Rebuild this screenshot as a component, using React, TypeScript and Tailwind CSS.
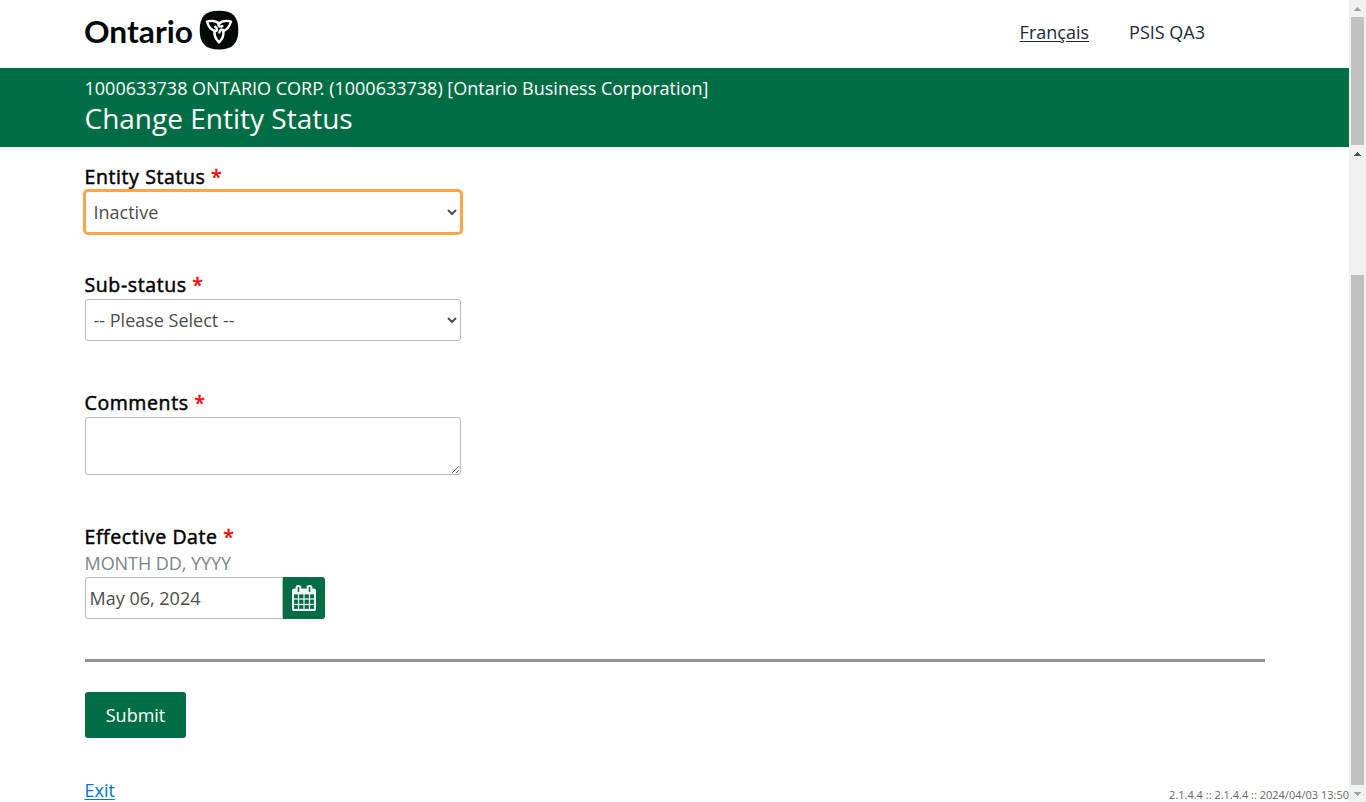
import React from 'react';

const PETAL = 'M15.600 20.400C14.800 24.800 16.500 28.900 20 32.400C23.500 28.900 25.300 24.600 24.200 20.200C22.700 18.900 20.600 19.500 20.400 22.600';

function TrilliumMark() {
  return (
    <svg className="h-10 w-10" viewBox="0 0 40 40" fill="none" aria-hidden="true">
      <path
        d="M20 .7C33.5.7 39.3 6.500 39.300 20S33.500 39.500 20 39.500.700 33.500.700 20 6.500.700 20 .700Z"
        fill="#040909"
      />
      <g stroke="#fff" strokeWidth="2.4" strokeLinejoin="round" strokeLinecap="round">
        <path d={PETAL} />
        <path d={PETAL} transform="rotate(120 20 18.500)" />
        <path d={PETAL} transform="rotate(240 20 18.500)" />
      </g>
    </svg>
  );
}

function CalendarIcon() {
  return (
    <svg className="h-[26px] w-6" viewBox="0 0 1664 1792" fill="#fff" stroke="#fff" strokeWidth="14" aria-hidden="true">
      <path d="M128 1664h288v-288h-288v288zm352 0h320v-288h-320v288zm-352-352h288v-320h-288v320zm352 0h320v-320h-320v320zm-352-384h288v-288h-288v288zm736 736h320v-288h-320v288zm-384-736h320v-288h-320v288zm768 736h288v-288h-288v288zm-384-352h320v-320h-320v320zm-352-864v-288q0-13-9.500-22.500t-22.500-9.500h-64q-13 0-22.500 9.500t-9.500 22.500v288q0 13 9.500 22.500t22.500 9.500h64q13 0 22.500-9.500t9.500-22.500zm736 864h288v-320h-288v320zm-384-384h320v-288h-320v288zm384 0h288v-288h-288v288zm32-480v-288q0-13-9.500-22.500t-22.500-9.500h-64q-13 0-22.500 9.500t-9.500 22.500v288q0 13 9.500 22.500t22.500 9.500h64q13 0 22.500-9.500t9.500-22.500zm384-64v1280q0 52-38 90t-90 38h-1408q-52 0-90-38t-38-90v-1280q0-52 38-90t90-38h128v-96q0-66 47-113t113-47h64q66 0 113 47t47 113v96h384v-96q0-66 47-113t113-47h64q66 0 113 47t47 113v96h128q52 0 90 38t38 90z" />
    </svg>
  );
}

function Arrow({ down = false, dark = false }: { down?: boolean; dark?: boolean }) {
  return (
    <div className="flex h-[17px] shrink-0 items-center justify-center">
      <svg
        className={down ? 'h-1 w-[7px] rotate-180' : 'h-1 w-[7px]'}
        viewBox="0 0 7 4"
        shapeRendering="crispEdges"
        aria-hidden="true"
      >
        <path d="M3 0h1v1h1v1h1v1h1v1H0V3h1V2h1V1h1z" fill={dark ? '#505050' : '#a3a3a3'} />
      </svg>
    </div>
  );
}

function ScrollColumn() {
  return (
    <div className="flex h-full w-[17px] shrink-0 flex-col bg-[#f1f1f1]">
      <Arrow />
      <div className="mx-0.5 h-32 bg-[#c1c1c1]" />
      <Arrow dark />
      <div className="mx-0.5 mt-[113px] h-[510px] bg-[#c1c1c1]" />
      <Arrow down />
    </div>
  );
}

function FieldLabel({ htmlFor, children }: { htmlFor: string; children: React.ReactNode }) {
  return (
    <label htmlFor={htmlFor} className="-ml-[0.5px] block h-[27px] text-[19.5px] leading-[27px] tracking-[0.6px] text-black [-webkit-text-stroke:0.5px]">
      {children} <span className="text-[#f00]">*</span>
    </label>
  );
}

export default function App() {
  return (
    <div className="flex h-[802px] w-[1366px] overflow-hidden bg-white font-['Open_Sans',sans-serif] text-[18px]">
      <div className="flex min-w-0 flex-1 flex-col">
        <header className="flex h-[68px] shrink-0 items-start pr-[144px] pl-[85px]">
          <div className="flex pt-2.5">
            <svg className="h-10 w-[114px]" viewBox="0 0 114 40" role="img" aria-label="Ontario">
              <text x="-1" y="33" textLength="109" lengthAdjust="spacingAndGlyphs" fontFamily="Lato, sans-serif" fontWeight="700" fontSize="30" fill="#040909">
                Ontario
              </text>
            </svg>
            <TrilliumMark />
          </div>
          <nav className="ml-auto flex gap-10 pt-[19px] leading-[27px] text-[#1a2a3a]">
            <a href="#fr" className="underline underline-offset-[2px]">Français</a>
            <span>PSIS QA3</span>
          </nav>
        </header>

        <section className="h-[79px] shrink-0 bg-[#006e44] pt-[7px] pl-[84.5px] text-white">
          <p className="leading-[27px]">
            1000633738 ONTARIO COR<span className="tracking-[-3.3px]">P</span>. (1000633738) [Ontario Business Corporation]
          </p>
          <h1 className="text-[28px] leading-8">Change Entity Status</h1>
        </section>

        <main className="flex min-h-0 flex-1 flex-col items-start pt-4 pl-[85px]">
          <FieldLabel htmlFor="status">Entity Status</FieldLabel>
          <select
            id="status"
            defaultValue="inactive"
            className="mt-px h-[42px] w-[376px] shrink-0 rounded-[3px] border border-[#ffa447] bg-white pr-[5px] pl-[3.5px] text-[18px] text-[#4d4d4d] ring-2 ring-[#ffa447] outline-none"
          >
            <option value="inactive">Inactive</option>
          </select>

          <div className="mt-[38px]">
            <FieldLabel htmlFor="substatus">Sub-status</FieldLabel>
            <select
              id="substatus"
              className="mt-px block h-[42px] w-[376px] rounded-[3px] border border-[#bbb] bg-white pr-[5px] pl-[3.5px] text-[18px] text-[#4d4d4d]"
            >
              <option>-- Please Select --</option>
            </select>
          </div>

          <div className="mt-12">
            <FieldLabel htmlFor="comments">Comments</FieldLabel>
            <textarea
              id="comments"
              className="mt-px block h-[58px] w-[376px] rounded-[3px] border border-[#bbb] bg-white"
            />
          </div>

          <div className="mt-12">
            <FieldLabel htmlFor="date">Effective Date</FieldLabel>
            <p className="-ml-[0.5px] leading-[27px] tracking-[-0.05px] text-[#7b8488]">MONTH DD, YYYY</p>
            <div className="flex">
              <input
                id="date"
                defaultValue="May 06, 2024"
                className="h-[42px] w-[198px] rounded-l-[3px] border border-[#bbb] bg-white px-[3.5px] text-[18px] text-[#4d4d4d]"
              />
              <button
                type="button"
                aria-label="Choose date"
                className="flex h-[42px] w-[42px] items-center justify-center rounded-r-[3px] bg-[#006e44]"
              >
                <CalendarIcon />
              </button>
            </div>
          </div>

          <div className="mt-10 h-[3px] w-[1180px] shrink-0 bg-[#949494]" />

          <button type="button" className="mt-[30px] h-[46px] w-[101px] shrink-0 rounded-[3px] bg-[#006e44] text-white">
            Submit
          </button>

          <footer className="mt-[39px] flex w-full shrink-0 items-start justify-between">
            <a href="#exit" className="-ml-[0.5px] leading-[27px] text-[#0074d0] underline underline-offset-[2px]">Exit</a>
            <span className="pt-2.5 text-[11px] leading-4 text-[#666]">2.1.4.4 :: 2.1.4.4 :: 2024/04/03 13:50</span>
          </footer>
        </main>
      </div>
      <ScrollColumn />
    </div>
  );
}
